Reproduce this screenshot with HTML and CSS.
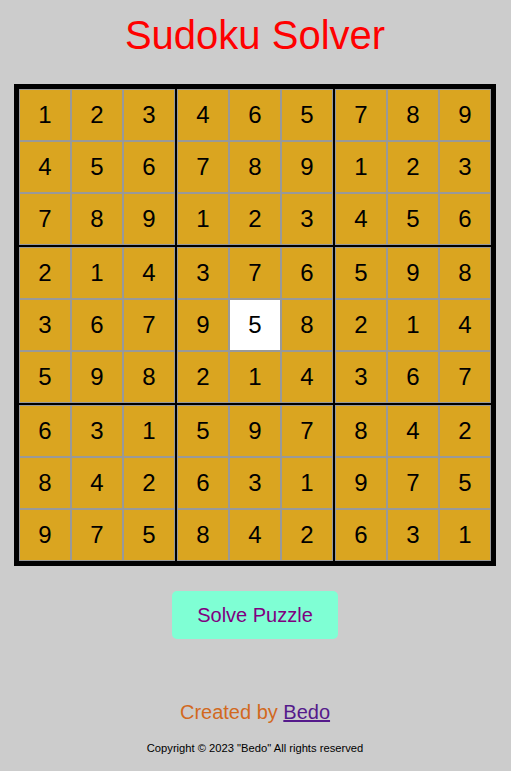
FILE: index.html
```html
<!DOCTYPE html>
<html lang="en">
<head>
<meta charset="utf-8">
<title>Sudoku Solver</title>
<link rel="stylesheet" href="styles.css">
</head>
<body>
<h1 class="title">Sudoku Solver</h1>
<div class="board">
  <div class="box"><div class="cell">1</div><div class="cell">2</div><div class="cell">3</div><div class="cell">4</div><div class="cell">5</div><div class="cell">6</div><div class="cell">7</div><div class="cell">8</div><div class="cell">9</div></div>
  <div class="box"><div class="cell">4</div><div class="cell">6</div><div class="cell">5</div><div class="cell">7</div><div class="cell">8</div><div class="cell">9</div><div class="cell">1</div><div class="cell">2</div><div class="cell">3</div></div>
  <div class="box"><div class="cell">7</div><div class="cell">8</div><div class="cell">9</div><div class="cell">1</div><div class="cell">2</div><div class="cell">3</div><div class="cell">4</div><div class="cell">5</div><div class="cell">6</div></div>
  <div class="box"><div class="cell">2</div><div class="cell">1</div><div class="cell">4</div><div class="cell">3</div><div class="cell">6</div><div class="cell">7</div><div class="cell">5</div><div class="cell">9</div><div class="cell">8</div></div>
  <div class="box"><div class="cell">3</div><div class="cell">7</div><div class="cell">6</div><div class="cell">9</div><div class="cell cell-given">5</div><div class="cell">8</div><div class="cell">2</div><div class="cell">1</div><div class="cell">4</div></div>
  <div class="box"><div class="cell">5</div><div class="cell">9</div><div class="cell">8</div><div class="cell">2</div><div class="cell">1</div><div class="cell">4</div><div class="cell">3</div><div class="cell">6</div><div class="cell">7</div></div>
  <div class="box"><div class="cell">6</div><div class="cell">3</div><div class="cell">1</div><div class="cell">8</div><div class="cell">4</div><div class="cell">2</div><div class="cell">9</div><div class="cell">7</div><div class="cell">5</div></div>
  <div class="box"><div class="cell">5</div><div class="cell">9</div><div class="cell">7</div><div class="cell">6</div><div class="cell">3</div><div class="cell">1</div><div class="cell">8</div><div class="cell">4</div><div class="cell">2</div></div>
  <div class="box"><div class="cell">8</div><div class="cell">4</div><div class="cell">2</div><div class="cell">9</div><div class="cell">7</div><div class="cell">5</div><div class="cell">6</div><div class="cell">3</div><div class="cell">1</div></div>
</div>
<div class="actions">
  <button class="solve-btn" type="button">Solve Puzzle</button>
</div>
<footer class="footer">
  <p class="credit">Created by <a class="credit-link" href="#">Bedo</a></p>
  <p class="copyright">Copyright © 2023 "Bedo" All rights reserved</p>
</footer>
</body>
</html>
```

FILE: styles.css
```css
html, body {
  margin: 0;
  padding: 0;
  background: #cccccc;
}

body {
  font-family: "Liberation Sans", Arial, sans-serif;
  color: #000;
  padding-right: 1px;
}

.title {
  margin: 12px 0 26px;
  font-size: 40px;
  line-height: 46px;
  font-weight: normal;
  color: #ff0000;
  text-align: center;
}

.board {
  width: 482px;
  box-sizing: border-box;
  margin: 0 auto;
  border: 5px solid #000;
  background: #000;
  display: grid;
  grid-template-columns: repeat(3, 156px);
  grid-template-rows: repeat(3, 156px);
  gap: 2px;
}

.box {
  display: grid;
  grid-template-columns: repeat(3, 52px);
  grid-template-rows: repeat(3, 52px);
}

.cell {
  box-sizing: border-box;
  border: 1px solid #999999;
  background: #daa520;
  display: flex;
  align-items: center;
  justify-content: center;
  font-size: 24px;
  color: #000;
}

.cell-given {
  background: #ffffff;
}

.actions {
  display: flex;
  justify-content: center;
  margin-top: 25px;
}

.solve-btn {
  width: 166px;
  height: 48px;
  border: none;
  border-radius: 5px;
  background: #7fffd4;
  color: #800080;
  font-family: "Liberation Sans", Arial, sans-serif;
  font-size: 20px;
  padding: 0;
}

.footer {
  margin-top: 62px;
  text-align: center;
}

.credit {
  margin: 0;
  font-size: 20px;
  line-height: 23px;
  color: #d2691e;
}

.credit-link {
  color: #551a8b;
}

.copyright {
  margin: 18px 0 0;
  font-size: 11.2px;
  line-height: 13px;
  color: #000;
}
```
